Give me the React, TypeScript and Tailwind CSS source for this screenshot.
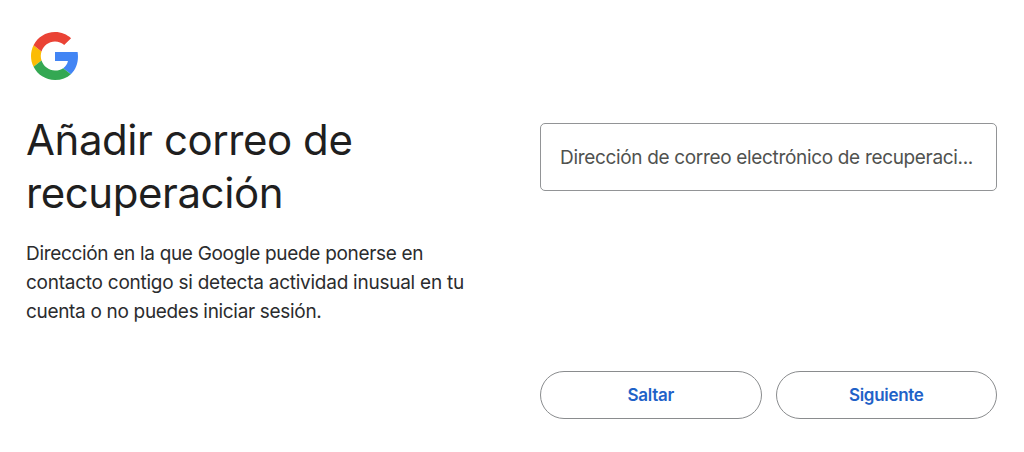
import * as React from "react";

function GoogleLogo() {
    return (
        <svg className="h-12 w-12" viewBox="0 0 48 48" aria-hidden="true">
            <path
                fill="#4285F4"
                d="M46.98 24.55c0-1.57-.15-3.09-.38-4.55H24v9.02h12.94c-.58 2.96-2.26 5.48-4.78 7.18l7.73 6c4.51-4.18 7.09-10.36 7.09-17.65z"
            />
            <path
                fill="#FBBC05"
                d="M10.53 28.59c-.48-1.45-.76-2.99-.76-4.59s.27-3.14.76-4.59l-7.98-6.19C.92 16.46 0 20.12 0 24c0 3.88.92 7.54 2.56 10.78l7.97-6.19z"
            />
            <path
                fill="#EA4335"
                d="M24 9.5c3.54 0 6.71 1.22 9.21 3.6l6.85-6.85C35.9 2.38 30.47 0 24 0 14.62 0 6.51 5.38 2.56 13.22l7.98 6.19C12.43 13.72 17.74 9.5 24 9.5z"
            />
            <path
                fill="#34A853"
                d="M24 48c6.48 0 11.93-2.13 15.89-5.81l-7.73-6c-2.15 1.45-4.92 2.3-8.16 2.3-6.26 0-11.57-4.22-13.47-9.91l-7.98 6.19C6.51 42.62 14.62 48 24 48z"
            />
        </svg>
    );
}

function OutlinedButton({ children }: { children: React.ReactNode }) {
    return (
        <button
            type="button"
            className="h-12 flex-1 rounded-full border border-[#8a8c8e] pt-[2px] text-[17px] font-semibold tracking-[-0.3px] text-[#1f62c8]"
        >
            {children}
        </button>
    );
}

export default function App() {
    return (
        <main className="flex h-[452px] w-[1024px] justify-between bg-white pr-[27px] pl-[26px] font-['Inter',sans-serif] text-[#1f1f1f]">
            <section className="flex w-[460px] flex-col pt-8">
                <div className="pl-[5px]">
                    <GoogleLogo />
                </div>
                <h1 className="mt-[33px] text-[42px] leading-[53px] font-normal tracking-[-0.43px] whitespace-nowrap">
                    Añadir correo de
                    <br />
                    recuperación
                </h1>
                <p className="mt-5 text-[19px] leading-[29px] tracking-[-0.32px] whitespace-nowrap text-[#2b2c2e]">
                    Dirección en la que Google puede ponerse en
                    <br />
                    <span className="tracking-[-0.25px]">
                        contacto contigo si detecta actividad inusual en tu
                    </span>
                    <br />
                    cuenta o no puedes iniciar sesión.
                </p>
            </section>
            <form className="flex w-[457px] flex-col justify-between pt-[123px] pb-[33px]">
                <input
                    type="email"
                    placeholder="Dirección de correo electrónico de recuperaci..."
                    className="h-[68px] w-full rounded-[5px] border border-[#929496] px-[19px] text-[19px] tracking-[-0.33px] placeholder:text-[#50524f]"
                />
                <div className="flex gap-[14px]">
                    <OutlinedButton>Saltar</OutlinedButton>
                    <OutlinedButton>Siguiente</OutlinedButton>
                </div>
            </form>
        </main>
    );
}
